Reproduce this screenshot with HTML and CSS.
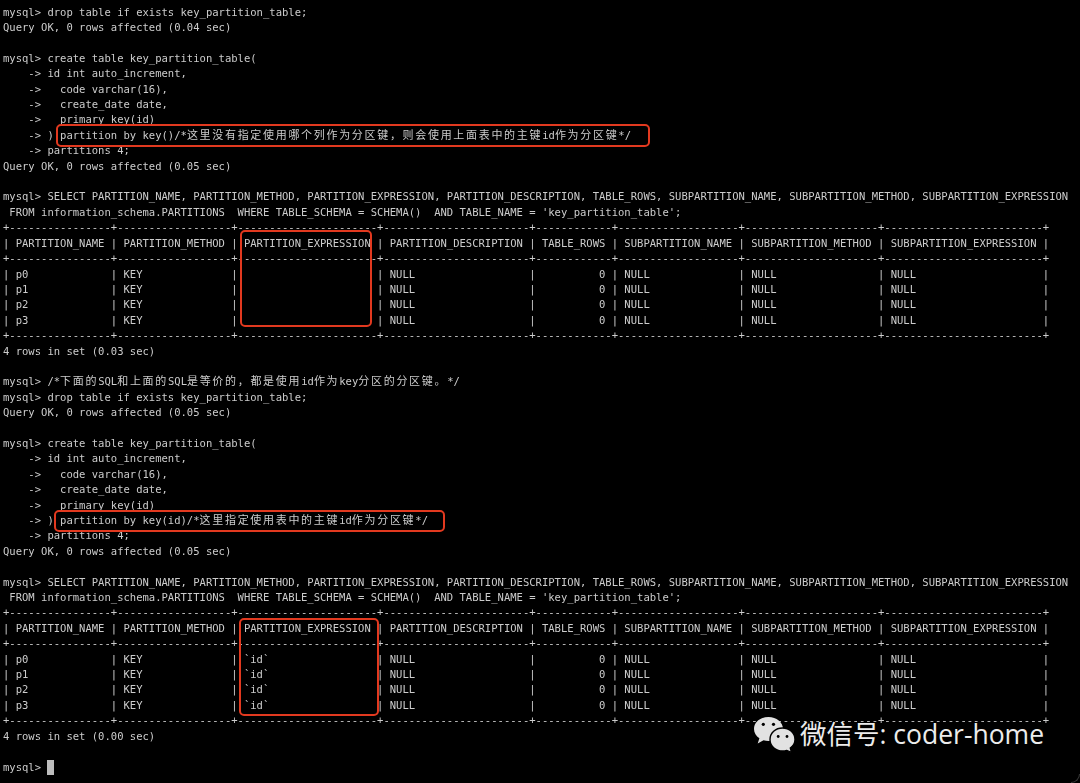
FILE: index.html
```html
<!DOCTYPE html>
<html lang="zh">
<head>
<meta charset="utf-8">
<title>mysql key partition</title>
<link rel="stylesheet" href="styles.css">
</head>
<body>
<main class="screen">
<div class="term">
<div class="ln">mysql&gt; drop table if exists key_partition_table;</div>
<div class="ln">Query OK, 0 rows affected (0.04 sec)</div>
<div class="ln"></div>
<div class="ln">mysql&gt; create table key_partition_table(</div>
<div class="ln">    -&gt; id int auto_increment,</div>
<div class="ln">    -&gt;   code varchar(16),</div>
<div class="ln">    -&gt;   create_date date,</div>
<div class="ln">    -&gt;   primary key(id)</div>
<div class="ln">    -&gt; ) partition by key()/*<span class="cjk">这里没有指定使用哪个列作为分区键，则会使用上面表中的主键</span>id<span class="cjk">作为分区键</span>*/</div>
<div class="ln">    -&gt; partitions 4;</div>
<div class="ln">Query OK, 0 rows affected (0.05 sec)</div>
<div class="ln"></div>
<div class="ln">mysql&gt; SELECT PARTITION_NAME, PARTITION_METHOD, PARTITION_EXPRESSION, PARTITION_DESCRIPTION, TABLE_ROWS, SUBPARTITION_NAME, SUBPARTITION_METHOD, SUBPARTITION_EXPRESSION</div>
<div class="ln"> FROM information_schema.PARTITIONS  WHERE TABLE_SCHEMA = SCHEMA()  AND TABLE_NAME = 'key_partition_table';</div>
<div class="ln">+----------------+------------------+----------------------+-----------------------+------------+-------------------+---------------------+-------------------------+</div>
<div class="ln">| PARTITION_NAME | PARTITION_METHOD | PARTITION_EXPRESSION | PARTITION_DESCRIPTION | TABLE_ROWS | SUBPARTITION_NAME | SUBPARTITION_METHOD | SUBPARTITION_EXPRESSION |</div>
<div class="ln">+----------------+------------------+----------------------+-----------------------+------------+-------------------+---------------------+-------------------------+</div>
<div class="ln">| p0             | KEY              |                      | NULL                  |          0 | NULL              | NULL                | NULL                    |</div>
<div class="ln">| p1             | KEY              |                      | NULL                  |          0 | NULL              | NULL                | NULL                    |</div>
<div class="ln">| p2             | KEY              |                      | NULL                  |          0 | NULL              | NULL                | NULL                    |</div>
<div class="ln">| p3             | KEY              |                      | NULL                  |          0 | NULL              | NULL                | NULL                    |</div>
<div class="ln">+----------------+------------------+----------------------+-----------------------+------------+-------------------+---------------------+-------------------------+</div>
<div class="ln">4 rows in set (0.03 sec)</div>
<div class="ln"></div>
<div class="ln">mysql&gt; /*<span class="cjk">下面的</span>SQL<span class="cjk">和上面的</span>SQL<span class="cjk">是等价的，都是使用</span>id<span class="cjk">作为</span>key<span class="cjk">分区的分区键。</span>*/</div>
<div class="ln">mysql&gt; drop table if exists key_partition_table;</div>
<div class="ln">Query OK, 0 rows affected (0.05 sec)</div>
<div class="ln"></div>
<div class="ln">mysql&gt; create table key_partition_table(</div>
<div class="ln">    -&gt; id int auto_increment,</div>
<div class="ln">    -&gt;   code varchar(16),</div>
<div class="ln">    -&gt;   create_date date,</div>
<div class="ln">    -&gt;   primary key(id)</div>
<div class="ln">    -&gt; ) partition by key(id)/*<span class="cjk">这里指定使用表中的主键</span>id<span class="cjk">作为分区键</span>*/</div>
<div class="ln">    -&gt; partitions 4;</div>
<div class="ln">Query OK, 0 rows affected (0.05 sec)</div>
<div class="ln"></div>
<div class="ln">mysql&gt; SELECT PARTITION_NAME, PARTITION_METHOD, PARTITION_EXPRESSION, PARTITION_DESCRIPTION, TABLE_ROWS, SUBPARTITION_NAME, SUBPARTITION_METHOD, SUBPARTITION_EXPRESSION</div>
<div class="ln"> FROM information_schema.PARTITIONS  WHERE TABLE_SCHEMA = SCHEMA()  AND TABLE_NAME = 'key_partition_table';</div>
<div class="ln">+----------------+------------------+----------------------+-----------------------+------------+-------------------+---------------------+-------------------------+</div>
<div class="ln">| PARTITION_NAME | PARTITION_METHOD | PARTITION_EXPRESSION | PARTITION_DESCRIPTION | TABLE_ROWS | SUBPARTITION_NAME | SUBPARTITION_METHOD | SUBPARTITION_EXPRESSION |</div>
<div class="ln">+----------------+------------------+----------------------+-----------------------+------------+-------------------+---------------------+-------------------------+</div>
<div class="ln">| p0             | KEY              | `id`                 | NULL                  |          0 | NULL              | NULL                | NULL                    |</div>
<div class="ln">| p1             | KEY              | `id`                 | NULL                  |          0 | NULL              | NULL                | NULL                    |</div>
<div class="ln">| p2             | KEY              | `id`                 | NULL                  |          0 | NULL              | NULL                | NULL                    |</div>
<div class="ln">| p3             | KEY              | `id`                 | NULL                  |          0 | NULL              | NULL                | NULL                    |</div>
<div class="ln">+----------------+------------------+----------------------+-----------------------+------------+-------------------+---------------------+-------------------------+</div>
<div class="ln">4 rows in set (0.00 sec)</div>
<div class="ln"></div>
<div class="ln">mysql&gt; <span class="cursor"></span></div>
</div>
<div class="mark mark-a"></div>
<div class="mark mark-b"></div>
<div class="mark mark-c"></div>
<div class="mark mark-d"></div>
<div class="watermark">
<svg class="wechat" viewBox="0 0 41 36" aria-hidden="true">
<path class="bubble" d="M14.500 1C6.500 1 0 6.100 0 13c0 3.900 2.100 7.100 5.400 9.300L3.700 27.500l5.800-3.200c1.600.4 3.300.7 5 .7 8 0 14.500-5.400 14.500-12S22.500 1 14.500 1z"/>
<circle class="eye" cx="9.300" cy="8.300" r="1.600"/>
<circle class="eye" cx="19.500" cy="8.300" r="1.600"/>
<path class="bubble outlined" d="M41 23.500C41 17 35.400 12 28.500 12S16 17 16 23.500 21.600 35 28.500 35c1.500 0 2.900-.2 4.300-.6l4.700 2-1.200-4.300c2.900-2.100 4.700-5.100 4.700-8.600z"/>
<circle class="eye" cx="24.200" cy="20.500" r="1.400"/>
<circle class="eye" cx="33" cy="20.500" r="1.400"/>
</svg>
<span class="brand">微信号: coder-home</span>
</div>
</main>
</body>
</html>
```
FILE: styles.css
```css
html, body {
  margin: 0;
  padding: 0;
  background: #000;
}

.screen {
  position: relative;
  width: 1080px;
  height: 783px;
  overflow: hidden;
  background: #000;
}

.screen::after {
  content: "";
  position: absolute;
  right: 0;
  bottom: 0;
  width: 9px;
  height: 9px;
  box-sizing: border-box;
  border-right: 1px solid #3a3a3a;
  border-bottom: 1px solid #3a3a3a;
  border-bottom-right-radius: 9px;
}

.term {
  padding: 4.6px 0 0 3px;
  font-family: "DejaVu Sans Mono", "Liberation Mono", monospace;
  font-size: 10.54px;
  color: #cccccc;
  filter: blur(0.45px);
}

.ln {
  height: 15.41px;
  line-height: 15.41px;
  white-space: pre;
}

.cjk {
  font-family: "Noto Sans CJK SC", sans-serif;
  font-size: 11px;
  line-height: 0;
  letter-spacing: 1.69px;
}

.cursor {
  display: inline-block;
  width: 7px;
  height: 15px;
  vertical-align: -4px;
  background: #bdbdbd;
}

.mark {
  position: absolute;
  box-sizing: border-box;
  border: 2.5px solid #e2391f;
  border-radius: 5px;
}

.mark-a { left: 56px; top: 124px; width: 594px; height: 23px; }
.mark-b { left: 240px; top: 230px; width: 132px; height: 97px; }
.mark-c { left: 54px; top: 510px; width: 391px; height: 22px; }
.mark-d { left: 239px; top: 618px; width: 140px; height: 98px; }

.watermark {
  position: absolute;
  left: 754px;
  top: 716px;
  display: flex;
  align-items: center;
  gap: 5px;
  color: #ececec;
}

.wechat {
  width: 41px;
  height: 36px;
  display: block;
  overflow: visible;
}

.bubble { fill: #e2e2e2; }
.outlined { stroke: #000; stroke-width: 1.4; }
.eye { fill: #000; }

.brand {
  font-family: "Open Sans", "Noto Sans CJK SC", sans-serif;
  font-size: 26.5px;
  line-height: 36px;
  white-space: nowrap;
}
```
